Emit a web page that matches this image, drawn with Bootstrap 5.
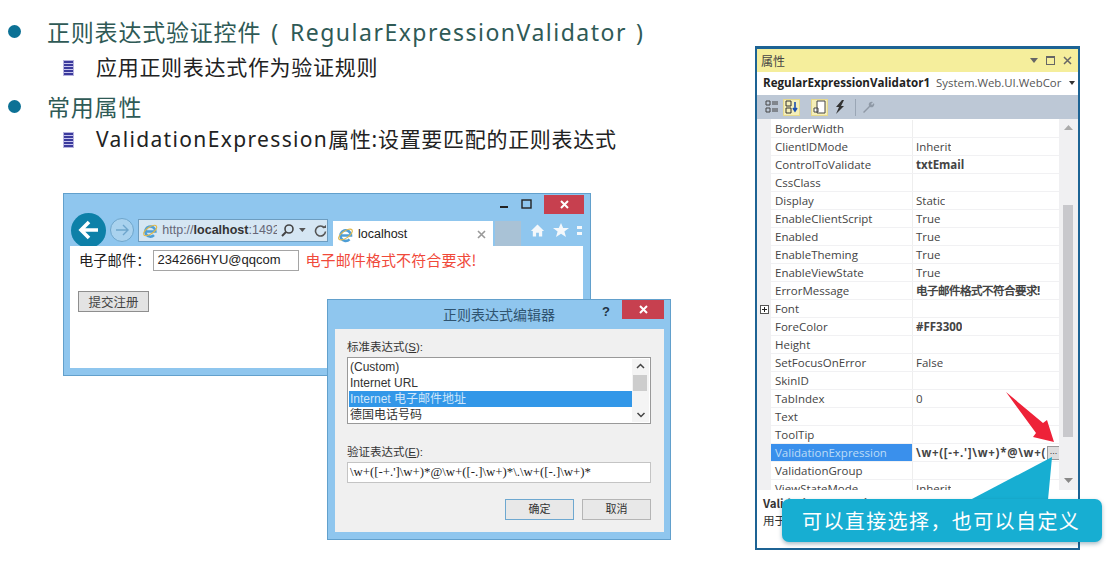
<!DOCTYPE html>
<html lang="zh-CN">
<head>
  <meta charset="UTF-8" />
  <title>RegularExpressionValidator</title>
  <link href="https://cdn.jsdelivr.net/npm/bootstrap@5.3.0/dist/css/bootstrap.min.css" rel="stylesheet">
  <style>
    html, body { margin: 0; height: 561px; overflow: hidden; background: #fff; }
    body { font-family: "Liberation Sans", "Noto Sans CJK SC", sans-serif; color: #222; }
    .slide { position: relative; width: 1120px; height: 561px; overflow: hidden; }
    .outline { position: absolute; left: 0; top: 15px; margin: 0; padding: 0; list-style: none; font-family: "Noto Sans", "Noto Sans CJK SC", sans-serif; }
    .outline li { display: flex; align-items: center; white-space: nowrap; }
    .outline li:nth-child(2) { margin-top: 2px; }
    .outline li:nth-child(3) { margin-top: 5px; }
    .outline li:nth-child(4) { margin-top: -1px; }
    .lv1 { height: 34px; font-size: 23px; color: #2f5a56; padding-left: 8px; letter-spacing: .8px; }
    .lv2 { height: 34px; font-size: 21px; color: #222; padding-left: 63px; letter-spacing: .7px; }
    .lat1 { letter-spacing: 1.5px; margin: 0 9px 0 11px; }
    .paren { margin-left: 10px; }
    .lat2 { letter-spacing: 1.35px; }
    .dot { width: 13px; height: 13px; border-radius: 50%; background: #0c7195; margin-right: 26px; margin-top: -2px; }
    .sq { width: 11px; height: 16px; margin-right: 22px; margin-top: -1px; background: repeating-linear-gradient(#3b3a9c 0 2px, #c9c6ee 2px 3px); border: 1px solid #b7b3df; }
    .win { position: absolute; background: #8fc6ee; border: 1px solid #62a0cc; }
    .browser { left: 63px; top: 193px; width: 528px; height: 183px; }
    .caps { position: absolute; right: 6px; top: 0; display: flex; align-items: center; gap: 12px; height: 20px; }
    .cap-close { width: 40px; height: 19px; background: #c7404f; color: #fff; display: flex; align-items: center; justify-content: center; }
    .ie-bar { position: absolute; left: 7px; right: 6px; top: 19px; height: 34px; display: flex; align-items: center; }
    .back { width: 35px; height: 35px; border-radius: 50%; background: #0d80a8; flex: none; display: flex; align-items: center; justify-content: center; }
    .fwd { width: 24px; height: 24px; border-radius: 50%; border: 1px solid #6ea6cc; background: #a9d2ee; margin: 0 4px 0 4px; flex: none; display: flex; align-items: center; justify-content: center; }
    .addr { width: 190px; height: 23px; margin-right: 5px; background: #d5e6f3; border: 1px solid #6d9dc0; display: flex; align-items: center; font-size: 12.5px; color: #667; padding-left: 3px; white-space: nowrap; overflow: hidden; flex: none; }
    .addr b { color: #333; }
    .addr-txt { width: 115px; overflow: hidden; margin-left: 4px; flex: none; }
    .tab-ie { width: 160px; height: 26px; margin-top: 8px; background: #fff; display: flex; align-items: center; font-size: 12.5px; padding: 0 7px 0 4px; flex: none; }
    .tab-new { width: 26px; height: 26px; margin-top: 8px; margin-left: 2px; background: #a9c2d6; flex: none; }
    .tools { margin-left: 9px; display: flex; gap: 8px; align-items: center; overflow: hidden; }
    .ie-page { position: absolute; left: 6px; right: 7px; top: 52px; bottom: 7px; background: #fff; font-size: 14.3px; padding: 3px 9px; }
    .mail-row { display: flex; align-items: center; height: 22px; font-family: "Noto Sans CJK SC", sans-serif; }
    .mail-input { width: 146px; height: 21px; border: 1px solid #a5a5a5; margin: 0 6px 0 3px; padding-left: 3px; font: 13px "Liberation Sans", sans-serif; line-height: 18px; color: #222; }
    .mail-err { color: #f0493a; font-size: 15px; letter-spacing: .1px; }
    .web-btn { display: block; margin-top: 20px; margin-left: -1px; width: 71px; height: 21px; background: #e3e3e3; border: 1px solid #8e8e8e; font-size: 12.5px; line-height: 19px; text-align: center; color: #444; font-family: "Noto Sans CJK SC", sans-serif; }
    .dialog { left: 327px; top: 299px; width: 344px; height: 241px; }
    .dlg-title { position: absolute; left: 0; right: 0; top: 0; height: 29px; text-align: center; font-size: 14px; line-height: 28px; color: #2f5470; font-family: "Noto Sans CJK SC", sans-serif; }
    .dlg-help { position: absolute; right: 60px; top: 2px; font-size: 13px; font-weight: 700; color: #234; }
    .dlg-close { position: absolute; right: 6px; top: 0; width: 42px; height: 19px; background: #c7404f; color: #fff; display: flex; align-items: center; justify-content: center; }
    .dlg-body { position: absolute; left: 7px; right: 6px; top: 29px; bottom: 7px; background: #f0f0f0; padding: 9px 13px 0 12px; font-size: 11px; }
    .dlg-lab { height: 19px; line-height: 19px; color: #333; font-size: 11.5px; }
    .dlg-lab.next { margin-top: 19px; }
    .dlg-list { position: relative; height: 67px; background: #fff; border: 1px solid #999; padding: 1px 0 0 1px; overflow: hidden; }
    .dlg-opt { height: 16px; line-height: 16px; padding-left: 1px; width: 285px; font-size: 12px; color: #333; }
    .dlg-opt.on { background: #3297e8; color: #cfe6fa; }
    .dlg-scroll { position: absolute; right: 1px; top: 1px; bottom: 1px; width: 17px; background: #f4f4f4; }
    .dlg-thumb { position: absolute; top: 16px; left: 1px; width: 14px; height: 16px; background: #cdcdcd; }
    .dlg-input { height: 21px; background: #fff; border: 1px solid #c4c4c4; font: 12.8px/19px "Liberation Serif", serif; padding-left: 2px; color: #222; white-space: nowrap; overflow: hidden; }
    .dlg-foot { margin-top: 16px; }
    .dlg-btn { width: 69px; height: 21px; background: #e8e8e8; border: 1px solid #b5b5b5; font-size: 11px; line-height: 19px; text-align: center; color: #333; }
    .dlg-btn.def { border-color: #6ea8d0; }
    .props { position: absolute; left: 755px; top: 46px; width: 325px; height: 504px; background: #fff; border: 2px solid #1d6394; border-top-width: 3px; overflow: hidden; font-size: 11.5px; }
    .p-head { height: 23px; background: #f5ee9c; display: flex; align-items: center; padding: 0 6px 0 4px; font-family: "Noto Sans CJK SC", sans-serif; font-size: 12px; color: #444; }
    .p-obj { height: 23px; padding: 0 0 2px 6px; display: flex; align-items: center; white-space: nowrap; font-family: "Open Sans", sans-serif; font-size: 11.4px; color: #555; background: #fff; }
    .p-obj b { color: #222; margin-right: 6px; font-size: 11.6px; }
    .p-tools { height: 24px; background: #bdc8d6; display: flex; align-items: center; gap: 3px; padding-left: 6px; }
    .p-ico { width: 17px; height: 17px; display: flex; align-items: center; justify-content: center; flex: none; }
    .p-ico.on { background: #f5efb8; border: 1px solid #e6d98c; }
    .p-sep { width: 1px; height: 17px; background: #9aa6b5; margin-left: 4px; }
    .p-grid { position: relative; height: 371px; background: #f0f0f2; padding-left: 14px; overflow: hidden; }
    .p-rows { width: 289px; background: #fff; padding-top: 1px; font-family: "Open Sans", sans-serif; }
    .p-row { display: flex; height: 18px; line-height: 17px; border-bottom: 1px solid #f1f1f3; color: #444; white-space: nowrap; }
    .p-k { width: 142px; padding-left: 4px; border-right: 1px solid #eee; flex: none; }
    .p-v { padding-left: 3px; overflow: hidden; }
    .p-expr { letter-spacing: .7px; }
    .p-row.sel .p-k { background: #3a90ec; color: #bcdcf7; }
    .p-plus { position: absolute; left: 3px; top: 186px; width: 9px; height: 9px; display: block; }
    .p-more { position: absolute; left: 290px; top: 327px; width: 13px; height: 14px; background: #ddd; border: 1px solid #999; font-size: 9px; line-height: 9px; text-align: center; color: #333; }
    .p-sb { position: absolute; right: 3px; top: 0; bottom: 0; width: 16px; background: #f0f0f2; }
    .p-sb i { position: absolute; left: 4px; width: 10px; background: #c8c8cc; top: 86px; height: 232px; }
    .p-desc { padding: 5px 6px; font-size: 11.5px; line-height: 17px; font-family: "Noto Sans CJK SC", sans-serif; color: #333; }
    .overlay { position: absolute; left: 0; top: 0; pointer-events: none; }
    .tip { position: absolute; left: 782px; top: 499px; width: 320px; height: 43px; border-radius: 7px; background: #17aed2; box-shadow: 0 2px 4px rgba(0,60,90,.35); color: #fff; font-family: "Noto Sans CJK SC", sans-serif; font-size: 20px; line-height: 43px; padding-left: 20px; letter-spacing: 1.4px; white-space: nowrap; }
  </style>
</head>
<body>
<div class="slide">
  <ul class="outline">
    <li class="lv1"><span class="dot"></span>正则表达式验证控件<span class="paren">(</span><span class="lat1">RegularExpressionValidator</span><span>)</span></li>
    <li class="lv2"><span class="sq"></span>应用正则表达式作为验证规则</li>
    <li class="lv1"><span class="dot"></span>常用属性</li>
    <li class="lv2"><span class="sq"></span><span class="lat2">ValidationExpression</span>属性:设置要匹配的正则表达式</li>
  </ul>

  <div class="win browser">
    <div class="caps">
      <svg width="10" height="10" viewBox="0 0 10 10"><rect x="1" y="7" width="8" height="2" fill="#222"/></svg>
      <svg width="11" height="10" viewBox="0 0 11 10"><rect x="1" y="1" width="9" height="8" fill="none" stroke="#222" stroke-width="1.4"/></svg>
      <span class="cap-close"><svg width="9" height="9" viewBox="0 0 9 9"><path d="M1 1l7 7M8 1l-7 7" stroke="#fff" stroke-width="2"/></svg></span>
    </div>
    <div class="ie-bar">
      <span class="back"><svg width="22" height="20" viewBox="0 0 22 20"><path d="M11 2L3 10l8 8M3 10h17" fill="none" stroke="#fff" stroke-width="3.6"/></svg></span>
      <span class="fwd"><svg width="14" height="12" viewBox="0 0 14 12"><path d="M8 1l5 5-5 5M13 6H1" fill="none" stroke="#6ea6cc" stroke-width="1.4"/></svg></span>
      <span class="addr">
        <svg class="flex-none" width="17" height="17" viewBox="0 0 17 17"><path d="M3.500 9.500h10.500a5.300 5.300 0 1 0-1.500 3.800" fill="none" stroke="#4d9ed6" stroke-width="2.600"/><ellipse cx="8.500" cy="8.500" rx="8" ry="3.500" transform="rotate(-35 8.500 8.500)" fill="none" stroke="#e0b84a" stroke-width="1.200"/></svg>
        <span class="addr-txt">http://<b>localhost</b>:1492</span>
        <span class="ms-1 d-flex"><svg width="14" height="14" viewBox="0 0 14 14"><circle cx="8" cy="6" r="4" fill="none" stroke="#444" stroke-width="1.6"/><path d="M5 9l-4 4" stroke="#444" stroke-width="2"/></svg></span>
        <svg class="ms-1" width="7" height="4" viewBox="0 0 7 4"><path d="M0 0h7L3.500 4z" fill="#555"/></svg>
        <span class="ms-2 d-flex"><svg width="13" height="13" viewBox="0 0 13 13"><path d="M10.500 4A5 5 0 1 0 11.500 7.500" fill="none" stroke="#555" stroke-width="1.6"/><path d="M8 4h4V1z" fill="#555"/></svg></span>
      </span>
      <span class="tab-ie">
        <svg class="me-1 flex-none" width="17" height="17" viewBox="0 0 17 17"><path d="M3.500 9.500h10.500a5.300 5.300 0 1 0-1.500 3.800" fill="none" stroke="#4d9ed6" stroke-width="2.600"/><ellipse cx="8.500" cy="8.500" rx="8" ry="3.500" transform="rotate(-35 8.500 8.500)" fill="none" stroke="#e0b84a" stroke-width="1.200"/></svg>
        localhost
        <svg class="ms-auto" width="9" height="9" viewBox="0 0 9 9"><path d="M1 1l7 7M8 1l-7 7" stroke="#999" stroke-width="1.6"/></svg>
      </span>
      <span class="tab-new"></span>
      <span class="tools">
        <svg width="15" height="15" viewBox="0 0 16 15"><path d="M8 1L1 8h2v6h3.500v-4h3v4H13V8h2z" fill="#f4f8fb"/></svg>
        <svg width="16" height="15" viewBox="0 0 16 15"><path d="M8 0l2.200 5H16l-4.600 3.400L13 14 8 10.700 3 14l1.600-5.600L0 5h5.800z" fill="#f4f8fb"/></svg>
        <svg width="5" height="15" viewBox="0 0 5 15"><path d="M0 3h5v3H0zM0 9h5v3H0z" fill="#f4f8fb"/></svg>
      </span>
    </div>
    <div class="ie-page">
      <div class="mail-row">电子邮件：<span class="mail-input">234266HYU@qqcom</span><span class="mail-err">电子邮件格式不符合要求!</span></div>
      <span class="web-btn">提交注册</span>
    </div>
  </div>

  <div class="win dialog">
    <div class="dlg-title">正则表达式编辑器</div>
    <span class="dlg-help">?</span>
    <span class="dlg-close"><svg width="9" height="9" viewBox="0 0 9 9"><path d="M1 1l7 7M8 1l-7 7" stroke="#fff" stroke-width="2"/></svg></span>
    <div class="dlg-body">
      <div class="dlg-lab">标准表达式(<u>S</u>):</div>
      <div class="dlg-list">
        <div class="dlg-opt">(Custom)</div>
        <div class="dlg-opt">Internet URL</div>
        <div class="dlg-opt on">Internet 电子邮件地址</div>
        <div class="dlg-opt">德国电话号码</div>
        <div class="dlg-scroll">
          <svg class="d-block mx-auto mt-1" width="9" height="6" viewBox="0 0 9 6"><path d="M1 5l3.500-3.500L8 5" fill="none" stroke="#444" stroke-width="1.500"/></svg>
          <span class="dlg-thumb"></span>
          <svg class="position-absolute bottom-0 start-50 translate-middle-x mb-1" width="9" height="6" viewBox="0 0 9 6"><path d="M1 1l3.500 3.500L8 1" fill="none" stroke="#444" stroke-width="1.500"/></svg>
        </div>
      </div>
      <div class="dlg-lab next">验证表达式(<u>E</u>):</div>
      <div class="dlg-input">\w+([-+.']\w+)*@\w+([-.]\w+)*\.\w+([-.]\w+)*</div>
      <div class="d-flex justify-content-end gap-2 dlg-foot">
        <span class="dlg-btn def">确定</span><span class="dlg-btn">取消</span>
      </div>
    </div>
  </div>

  <div class="props">
    <div class="p-head"><span>属性</span>
      <span class="ms-auto d-flex align-items-center gap-2">
        <svg width="8" height="5" viewBox="0 0 8 5"><path d="M0 0h8L4 5z" fill="#666"/></svg>
        <svg width="9" height="9" viewBox="0 0 9 9"><rect x=".5" y="1" width="8" height="7.500" fill="none" stroke="#666"/><path d="M0 1h9" stroke="#666" stroke-width="2"/></svg>
        <svg width="9" height="9" viewBox="0 0 9 9"><path d="M1 1l7 7M8 1l-7 7" stroke="#666" stroke-width="1.500"/></svg>
      </span>
    </div>
    <div class="p-obj"><b>RegularExpressionValidator1</b>System.Web.UI.WebCor<svg class="ms-2" width="6" height="4" viewBox="0 0 6 4"><path d="M0 0h6L3 4z" fill="#333"/></svg></div>
    <div class="p-tools">
      <span class="p-ico"><svg width="14" height="14" viewBox="0 0 14 14"><path d="M1 1h4v4H1zM1 8h4v4H1zM7 2h6M7 4h6M7 9h6M7 11h6" fill="none" stroke="#444"/></svg></span>
      <span class="p-ico on"><svg width="14" height="14" viewBox="0 0 14 14"><path d="M1 1h5v5H1zM1 8h5v5H1z" fill="none" stroke="#333"/><path d="M10 2v9M8 8l2 3 2-3" fill="none" stroke="#1b4fb0" stroke-width="1.600"/></svg></span>
      <span class="p-ico on ms-2"><svg width="14" height="14" viewBox="0 0 14 14"><path d="M4 1h8v12H4zM1 8h4v4H1z" fill="#fff" stroke="#444"/></svg></span>
      <span class="p-ico"><svg width="12" height="14" viewBox="0 0 12 14"><path d="M8 0L2 7h3l-3 7 8-8H7l3-6z" fill="#333"/></svg></span>
      <span class="p-sep"></span>
      <span class="p-ico"><svg width="14" height="14" viewBox="0 0 14 14"><path d="M2 12l6-6a3 3 0 0 1 4-4L10 4l1 1 2-2a3 3 0 0 1-4 4l-6 6z" fill="#8f99a6"/></svg></span>
    </div>
    <div class="p-grid">
      <div class="p-rows">
        <div class="p-row"><span class="p-k">BorderWidth</span><span class="p-v"></span></div>
        <div class="p-row"><span class="p-k">ClientIDMode</span><span class="p-v">Inherit</span></div>
        <div class="p-row"><span class="p-k">ControlToValidate</span><span class="p-v fw-bold">txtEmail</span></div>
        <div class="p-row"><span class="p-k">CssClass</span><span class="p-v"></span></div>
        <div class="p-row"><span class="p-k">Display</span><span class="p-v">Static</span></div>
        <div class="p-row"><span class="p-k">EnableClientScript</span><span class="p-v">True</span></div>
        <div class="p-row"><span class="p-k">Enabled</span><span class="p-v">True</span></div>
        <div class="p-row"><span class="p-k">EnableTheming</span><span class="p-v">True</span></div>
        <div class="p-row"><span class="p-k">EnableViewState</span><span class="p-v">True</span></div>
        <div class="p-row"><span class="p-k">ErrorMessage</span><span class="p-v fw-bold">电子邮件格式不符合要求!</span></div>
        <div class="p-row"><span class="p-k">Font</span><span class="p-v"></span></div>
        <div class="p-row"><span class="p-k">ForeColor</span><span class="p-v fw-bold">#FF3300</span></div>
        <div class="p-row"><span class="p-k">Height</span><span class="p-v"></span></div>
        <div class="p-row"><span class="p-k">SetFocusOnError</span><span class="p-v">False</span></div>
        <div class="p-row"><span class="p-k">SkinID</span><span class="p-v"></span></div>
        <div class="p-row"><span class="p-k">TabIndex</span><span class="p-v">0</span></div>
        <div class="p-row"><span class="p-k">Text</span><span class="p-v"></span></div>
        <div class="p-row"><span class="p-k">ToolTip</span><span class="p-v"></span></div>
        <div class="p-row sel"><span class="p-k">ValidationExpression</span><span class="p-v fw-bold p-expr">\w+([-+.']\w+)*@\w+(</span></div>
        <div class="p-row"><span class="p-k">ValidationGroup</span><span class="p-v"></span></div>
        <div class="p-row"><span class="p-k">ViewStateMode</span><span class="p-v">Inherit</span></div>
      </div>
      <svg class="p-plus" viewBox="0 0 9 9"><rect x=".5" y=".5" width="8" height="8" fill="#fff" stroke="#555"/><path d="M2 4.500h5M4.500 2v5" stroke="#222"/></svg>
      <span class="p-more">...</span>
      <div class="p-sb">
        <svg class="position-absolute" style="left:5px;top:6px" width="9" height="5" viewBox="0 0 9 5"><path d="M0 5l4.500-5L9 5z" fill="#aaa"/></svg>
        <i></i>
        <svg class="position-absolute" style="left:5px;bottom:7px" width="9" height="5" viewBox="0 0 9 5"><path d="M0 0l4.500 5L9 0z" fill="#888"/></svg>
      </div>
    </div>
    <div class="p-desc"><b>ValidationExpression</b><br>用于验证的正则表达式。</div>
  </div>

  <svg class="overlay" width="1120" height="561" viewBox="0 0 1120 561">
    <path d="M1006 392L1043 423L1047 420L1054 442L1033 437L1036 433Z" fill="#ee2238"/>
    <path d="M970 500L1052 457L1048 500Z" fill="#17aed2"/>
  </svg>
  <div class="tip">可以直接选择，也可以自定义</div>
</div>
</body>
</html>
